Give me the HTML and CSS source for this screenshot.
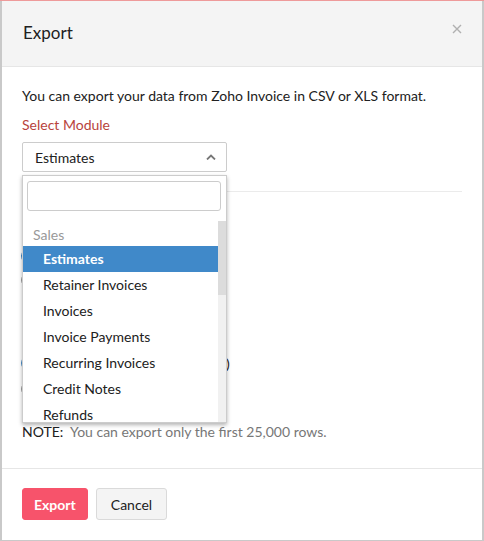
FILE: index.html
```html
<!DOCTYPE html>
<html lang="en">

<head>
    <meta charset="UTF-8">
    <title>Export</title>
    <link rel="stylesheet" href="styles.css">
</head>

<body>
    <div class="modal">
        <!-- header -->
        <div class="modal_head">
            <h4>Export</h4>
            <span class="close">
                <svg width="10" height="10" viewBox="0 0 10 10">
                    <path d="M1 1L9 9M9 1L1 9" stroke="#b0b0b0" stroke-width="1.4" />
                </svg>
            </span>
        </div>

        <!-- body -->
        <div class="modal_body">
            <p class="intro">You can export your data from Zoho Invoice in CSV or XLS format.</p>
            <label class="req">Select Module</label>

            <div class="select_wrap">
                <div class="select">
                    <span>Estimates</span>
                    <svg width="10" height="6" viewBox="0 0 10 6">
                        <path d="M1 5.5L5 1.5L9 5.5" fill="none" stroke="#777" stroke-width="1.8" />
                    </svg>
                </div>

                <div class="dropdown">
                    <div class="search"><input type="text"></div>
                    <div class="list">
                        <ul class="options">
                            <li class="group">Sales</li>
                            <li class="active">Estimates</li>
                            <li>Retainer Invoices</li>
                            <li>Invoices</li>
                            <li>Invoice Payments</li>
                            <li>Recurring Invoices</li>
                            <li>Credit Notes</li>
                            <li>Refunds</li>
                        </ul>
                        <div class="scrollbar"><div class="thumb"></div></div>
                    </div>
                </div>
            </div>

            <hr>

            <!-- options behind the dropdown -->
            <div class="field">
                <div class="field_label">Export</div>
                <div class="radio checked">All Estimates</div>
                <div class="radio">Specific Period</div>
            </div>
            <div class="field format">
                <div class="field_label">Export File Format</div>
                <div class="radio checked">CSV (Comma Separated Value)</div>
                <div class="radio">XLS (Excel)</div>
            </div>

            <p class="note"><b>NOTE:</b>&nbsp; You can export only the first 25,000 rows.</p>
        </div>

        <!-- footer -->
        <div class="modal_foot">
            <button class="btn primary">Export</button>
            <button class="btn">Cancel</button>
        </div>
    </div>
</body>

</html>
```

FILE: styles.css
```css
body {
    margin: 0;
    background: #c9c9c9;
    border-top: 1px solid #ee9a9a;
    font-family: Lato, "Noto Sans", sans-serif;
    font-size: 14px;
    color: #212121;
}

.modal {
    width: 480px;
    height: 539px;
    margin-left: 2px;
    background: #fff;
    display: flex;
    flex-direction: column;
}

.modal_head {
    height: 65px;
    background: #f4f4f4;
    border-bottom: 1px solid #e6e6e6;
    padding: 0 21px;
    display: flex;
    align-items: center;
    justify-content: space-between;
}

.modal_head h4 {
    margin: 0 0 2px 0;
    font-size: 17px;
    font-weight: normal;
}

.close {
    display: flex;
    margin: 0 -1px 10px 0;
}

.modal_body {
    flex: 1;
    padding: 20px 20px 0 20px;
}

.intro {
    margin: 0 0 11px 0;
    line-height: 18px;
}

.req {
    display: block;
    color: #b8433c;
    line-height: 18px;
    margin-bottom: 8px;
}

.select_wrap {
    position: relative;
    width: 205px;
}

.select {
    height: 28px;
    border: 1px solid #ccc;
    border-radius: 2px;
    padding: 0 10px 0 12px;
    display: flex;
    align-items: center;
    justify-content: space-between;
}

.dropdown {
    position: absolute;
    top: 33px;
    left: 0;
    width: 203px;
    height: 246px;
    background: #fff;
    border: 1px solid #ccc;
    box-shadow: 0 2px 4px rgba(0, 0, 0, 0.3);
    display: flex;
    flex-direction: column;
    z-index: 2;
}

.search {
    padding: 5px 5px 10px 4px;
}

.search input {
    width: 100%;
    height: 30px;
    box-sizing: border-box;
    border: 1px solid #ccc;
    border-radius: 3px;
}

.list {
    flex: 1;
    display: flex;
    overflow: hidden;
}

.options {
    flex: 1;
    list-style: none;
    margin: 0;
    padding: 0;
}

.options li {
    height: 26px;
    line-height: 26px;
    padding-left: 20px;
}

.options li.group {
    height: 25px;
    line-height: 28px;
    padding-left: 10px;
    color: #999;
}

.options li.active {
    background: #4089c9;
    color: #fff;
    font-weight: bold;
}

.scrollbar {
    width: 8px;
    background: #f1f1f1;
}

.thumb {
    height: 74px;
    background: #dcdcdc;
}

hr {
    border: 0;
    border-top: 1px solid #ebebeb;
    margin: 19px 0 0 0;
}

.field {
    padding-top: 30px;
}

.field.format {
    padding-top: 37px;
}

.field_label {
    line-height: 18px;
    margin-bottom: 4px;
}

.radio {
    position: relative;
    line-height: 24px;
    padding-left: 22px;
}

.format .radio {
    line-height: 26px;
}

.radio::before {
    content: "";
    position: absolute;
    left: -1px;
    top: 5px;
    width: 12px;
    height: 12px;
    border: 1px solid #999;
    border-radius: 50%;
}

.radio.checked::before {
    border: 4px solid #4089c9;
    width: 6px;
    height: 6px;
}

.note {
    margin: 20px 0 0 0;
    color: #777;
    line-height: 18px;
}

.note b {
    font-weight: normal;
    color: #212121;
}

.modal_foot {
    border-top: 1px solid #e6e6e6;
    padding: 19px 20px 20px 20px;
    display: flex;
    gap: 8px;
}

.btn {
    height: 32px;
    padding: 0 14px;
    font-family: Lato, "Noto Sans", sans-serif;
    font-size: 14px;
    border: 1px solid #dadada;
    border-radius: 3px;
    background: #f4f4f4;
    color: #212121;
}

.btn.primary {
    padding: 0 11px;
    background: #f7536b;
    border-color: #f7536b;
    color: #fff;
    font-weight: bold;
}
```
